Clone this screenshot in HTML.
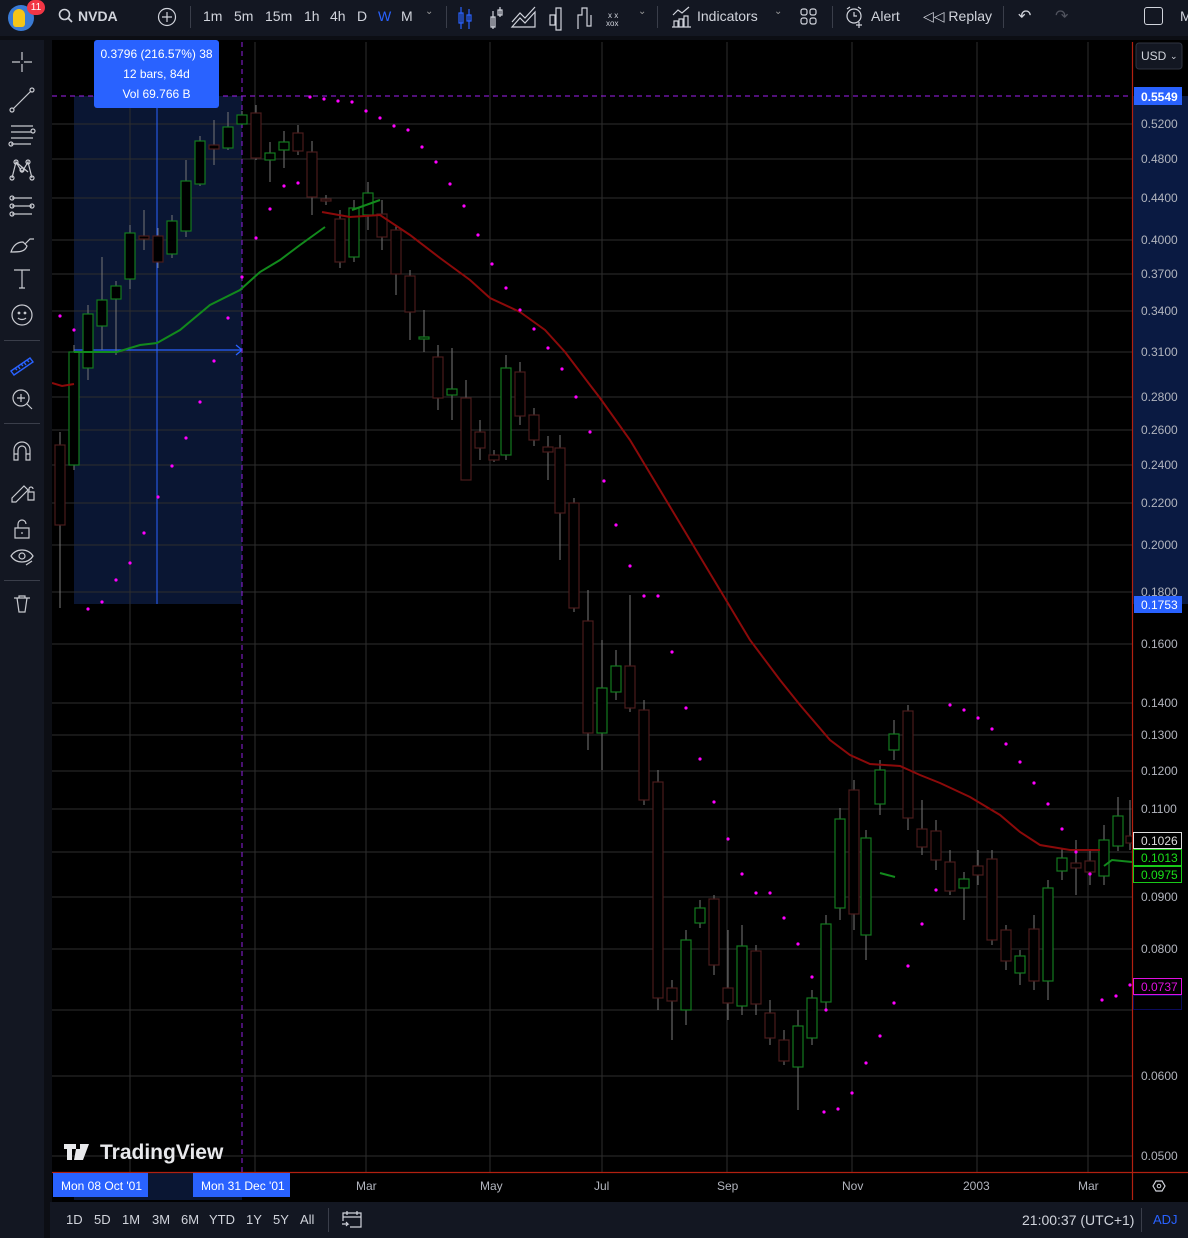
<!DOCTYPE html>
<html><head><meta charset="utf-8"><style>
*{margin:0;padding:0;box-sizing:border-box}
body{width:1188px;height:1238px;background:#0c0e14;overflow:hidden;font-family:"Liberation Sans",sans-serif;color:#d1d4dc;position:relative}
.top{position:absolute;left:0;top:0;width:1188px;height:36px;background:#131722}
.left{position:absolute;left:0;top:40px;width:44px;height:1198px;background:#131722}
.bot{position:absolute;left:50px;top:1202px;width:1138px;height:36px;background:#131722}
.t{position:absolute;font-size:14px;color:#d1d4dc;white-space:nowrap}
.sep{position:absolute;width:1px;background:#3a3e4a}
svg{position:absolute}
</style></head><body>
<div class="top"></div><div class="left"></div><div class="bot"></div>

<!-- top bar -->
<div style="position:absolute;left:8px;top:5px;width:26px;height:26px;border-radius:50%;background:#3a7bd5"></div>
<div style="position:absolute;left:13px;top:9px;width:12px;height:18px;background:#f5c518;border-radius:6px 6px 3px 3px"></div>
<div style="position:absolute;left:27px;top:0;width:18px;height:15px;border-radius:8px;background:#f23645;color:#fff;font-size:10px;text-align:center;line-height:15px">11</div>
<svg style="left:58px;top:8px" width="16" height="16"><circle cx="6.5" cy="6.5" r="5" fill="none" stroke="#d1d4dc" stroke-width="1.6"/><path d="M10 10l4 4" stroke="#d1d4dc" stroke-width="1.8"/></svg>
<div class="t" style="left:78px;top:8px;font-weight:bold">NVDA</div>
<svg style="left:156px;top:6px" width="22" height="22"><circle cx="11" cy="11" r="8.5" fill="none" stroke="#d1d4dc" stroke-width="1.2"/><path d="M11 6v10M6 11h10" stroke="#d1d4dc" stroke-width="1.2"/></svg>
<div class="sep" style="left:190px;top:6px;height:22px"></div>
<div class="t" style="left:203px;top:8px">1m</div>
<div class="t" style="left:234px;top:8px">5m</div>
<div class="t" style="left:265px;top:8px">15m</div>
<div class="t" style="left:304px;top:8px">1h</div>
<div class="t" style="left:330px;top:8px">4h</div>
<div class="t" style="left:357px;top:8px">D</div>
<div class="t" style="left:378px;top:8px;color:#2962ff">W</div>
<div class="t" style="left:401px;top:8px">M</div>
<div class="t" style="left:425px;top:6px;font-size:10px;color:#999">⌄</div>
<div class="sep" style="left:446px;top:6px;height:22px"></div>
<svg style="left:456px;top:5px" width="200" height="26" fill="none" stroke-width="1.2">
<path d="M5 2v22M3 8h4v10H3zM13 4v20M11 10h4v6h-4z" stroke="#2962ff"/>
<path d="M37 6v18M35 12h4v10h-4zM44 2v10M42 5h4v5h-4z" stroke="#d1d4dc"/>
<path d="M56 22l8-9 5 5 10-11v15H56z M56 17l8-9 5 5 10-11" stroke="#d1d4dc"/>
<path d="M94 10h5v10h-5zM100 3h5v22h-5z" stroke="#d1d4dc"/>
<path d="M122 24v-14h4v-7h5v18h4v-11" stroke="#d1d4dc"/>
<text x="152" y="13" font-size="8" fill="#d1d4dc" stroke="none">x x</text><text x="150" y="21" font-size="8" fill="#d1d4dc" stroke="none">xox</text>
</svg>
<div class="t" style="left:638px;top:6px;font-size:10px;color:#999">⌄</div>
<div class="sep" style="left:657px;top:6px;height:22px"></div>
<svg style="left:671px;top:5px" width="22" height="24" fill="none" stroke="#d1d4dc" stroke-width="1.2"><path d="M2 10l5-5 4 3 7-6M3 22v-6h4v6M8 22v-8h4v8M13 22v-11h4v11M1 22h19"/></svg>
<div class="t" style="left:697px;top:8px">Indicators</div>
<div class="t" style="left:774px;top:6px;font-size:10px;color:#999">⌄</div>
<svg style="left:799px;top:7px" width="20" height="20" fill="none" stroke="#d1d4dc" stroke-width="1.2"><rect x="2" y="2" width="6" height="6" rx="2"/><rect x="11" y="2" width="6" height="6" rx="2"/><rect x="2" y="11" width="6" height="6" rx="2"/><rect x="11" y="11" width="6" height="6" rx="2"/></svg>
<div class="sep" style="left:832px;top:6px;height:22px"></div>
<svg style="left:844px;top:5px" width="24" height="24" fill="none" stroke="#d1d4dc" stroke-width="1.2"><circle cx="10" cy="11" r="7"/><path d="M10 7v4h3M3 4l3-2M17 4l-3-2M15 17v6M12 20h6"/></svg>
<div class="t" style="left:871px;top:8px">Alert</div>
<div class="t" style="left:923px;top:8px">◁◁ Replay</div>
<div class="sep" style="left:1003px;top:6px;height:22px"></div>
<div class="t" style="left:1018px;top:6px;font-size:16px">↶</div>
<div class="t" style="left:1055px;top:6px;font-size:16px;color:#50535e">↷</div>
<div style="position:absolute;left:1144px;top:7px;width:19px;height:18px;border:1.3px solid #d1d4dc;border-radius:3px"></div>
<div class="t" style="left:1180px;top:8px">M</div>

<!-- left toolbar icons -->
<svg style="left:8px;top:48px" width="30" height="580" fill="none" stroke="#c8cad0" stroke-width="1.2">
<path d="M14 4v8M14 16v8M4 14h8M16 14h8"/>
<path d="M5 61l18-18"/><circle cx="4" cy="62" r="2"/><circle cx="24" cy="42" r="2"/>
<path d="M3 78h22M3 84h20M3 90h22M3 96h20"/><circle cx="25" cy="83" r="2"/><circle cx="3" cy="96" r="2"/>
<path d="M4 130l4-16 6 10 6-10 4 16M8 114l12 10"/><circle cx="4" cy="130" r="2"/><circle cx="8" cy="114" r="2"/><circle cx="20" cy="114" r="2"/><circle cx="24" cy="130" r="2"/><circle cx="14" cy="122" r="2"/>
<path d="M4 150h20M4 158h20M4 166h20"/><circle cx="4" cy="150" r="2"/><circle cx="4" cy="158" r="2"/><circle cx="4" cy="166" r="2"/><circle cx="24" cy="158" r="2"/>
<path d="M3 204c2-6 6-10 12-10l4 4c-2 6-8 6-16 6zM17 196l5-5 4 0"/>
<path d="M6 222h16M14 222v18M11 240h6"/>
<circle cx="14" cy="267" r="10"/><circle cx="11" cy="265" r=".8"/><circle cx="17" cy="265" r=".8"/><path d="M10 270c2 2 6 2 8 0"/>
<path d="M3 323l19-13 3 4-19 13z M7 320l2 2M10 318l2 3M13 316l2 2M16 314l2 3M19 312l2 2" stroke="#2962ff" stroke-width="1.4"/>
<circle cx="13" cy="350" r="8"/><path d="M19 356l5 5M13 346v8M9 350h8"/>
<path d="M6 412v-10a8 8 0 0 1 16 0v10h-4v-10a4 4 0 0 0-8 0v10zM6 406h4M18 406h4"/>
<path d="M4 450l12-12 4 4-12 12H4zM20 444h6v8h-6z M21 444v-3a2 2 0 0 1 4 0"/>
<path d="M7 480h14v10H7zM10 480v-4a4 4 0 0 1 8 0"/><path d="M14 484v2"/>
<path d="M3 508c5-8 17-8 22 0c-5 8-17 8-22 0z"/><circle cx="14" cy="508" r="3"/><path d="M18 517l6-4"/>
<path d="M6 550h16M9 550l2 14h6l2-14M11 550v-2h6v2"/>
</svg>
<div style="position:absolute;left:4px;top:340px;width:36px;height:1px;background:#3a3e4a"></div>
<div style="position:absolute;left:4px;top:423px;width:36px;height:1px;background:#3a3e4a"></div>
<div style="position:absolute;left:4px;top:580px;width:36px;height:1px;background:#3a3e4a"></div>

<!-- chart -->
<svg style="left:52px;top:40px" width="1136" height="1162" viewBox="52 40 1136 1162">
<rect x="52" y="40" width="1136" height="1162" fill="#000"/>
<rect x="74" y="96" width="168" height="508" fill="#0a1633"/>
<rect x="1133" y="96" width="55" height="508" fill="#0a1a42"/>
<rect x="74" y="1173" width="168" height="27" fill="#0a1633"/>
<g stroke="#2e2e2e" stroke-width="1">
<path d="M52 124H1132M52 159H1132M52 198H1132M52 240H1132M52 274H1132M52 311H1132M52 352H1132M52 397H1132M52 430H1132M52 465H1132M52 503H1132M52 545H1132M52 592H1132M52 644H1132M52 703H1132M52 735H1132M52 771H1132M52 809H1132M52 852H1132M52 897H1132M52 949H1132M52 1010H1132M52 1076H1132M52 1156H1132"/>
<path d="M130 42V1172M255 42V1172M366 42V1172M490 42V1172M602 42V1172M727 42V1172M852 42V1172M977 42V1172M1088 42V1172"/>
</g>
<path d="M157 100V604" stroke="#2962ff"/>
<path d="M74 350H242M236 345l6 5-6 5" stroke="#2962ff" fill="none" stroke-width="1.3"/>
<path d="M52 96H1132" stroke="#a020f0" stroke-dasharray="5 4"/>
<path d="M242 42V1172" stroke="#9020e0" stroke-dasharray="5 4"/>
<g stroke="#777" stroke-width="1">
<path d="M60 432V608M74 345V470M88 305V380M102 257V350M116 281V355M130 225V289M144 210V250M158 228V268M172 215V258M186 160V237M200 136V186M214 120V165M228 112V150M242 111V125M256 105V160M270 142V182M284 131V168M298 125V155M312 141V215M326 195V205M340 210V268M354 200V262M368 182V230M382 200V250M396 225V295M410 270V340M424 310V352M438 345V410M452 348V420M466 380V480M480 420V460M494 450V462M506 355V460M520 362V425M534 408V446M548 436V480M560 435V560M574 498V612M588 590V750M602 640V770M616 650V700M630 595V712M644 700V805M658 770V1010M672 980V1040M686 930V1025M700 900V928M714 895V975M728 930V1020M742 925V1015M756 945V1015M770 1000V1045M784 1030V1065M798 1010V1110M812 990V1045M826 915V1010M840 808V920M854 780V930M866 830V960M880 760V815M894 720V760M908 705V830M922 800V855M936 820V870M950 850V895M964 872V920M978 850V885M992 850V945M1006 925V970M1020 950V985M1034 915V990M1048 880V1000M1062 848V880M1076 840V895M1090 850V885M1104 825V885M1118 797V851M1130 800V850"/>
</g>
<g fill="#000" stroke-width="1.2">
<g stroke="#4a1c1c">
<rect x="55" y="445" width="10" height="80"/><rect x="139" y="236" width="10" height="3"/><rect x="153" y="236" width="10" height="26"/><rect x="209" y="145" width="10" height="4"/><rect x="251" y="113" width="10" height="45"/><rect x="293" y="133" width="10" height="18"/><rect x="307" y="152" width="10" height="45"/><rect x="321" y="199" width="10" height="2"/><rect x="335" y="219" width="10" height="43"/><rect x="377" y="214" width="10" height="23"/><rect x="391" y="230" width="10" height="44"/><rect x="405" y="276" width="10" height="36"/><rect x="433" y="357" width="10" height="41"/><rect x="461" y="398" width="10" height="82"/><rect x="475" y="432" width="10" height="16"/><rect x="489" y="455" width="10" height="5"/><rect x="515" y="372" width="10" height="44"/><rect x="529" y="415" width="10" height="25"/><rect x="543" y="447" width="10" height="5"/><rect x="555" y="448" width="10" height="65"/><rect x="569" y="503" width="10" height="105"/><rect x="583" y="621" width="10" height="112"/><rect x="625" y="666" width="10" height="42"/><rect x="639" y="710" width="10" height="90"/><rect x="653" y="782" width="10" height="216"/><rect x="667" y="988" width="10" height="13"/><rect x="709" y="899" width="10" height="66"/><rect x="723" y="988" width="10" height="15"/><rect x="751" y="951" width="10" height="53"/><rect x="765" y="1013" width="10" height="25"/><rect x="779" y="1040" width="10" height="21"/><rect x="849" y="790" width="10" height="124"/><rect x="903" y="711" width="10" height="107"/><rect x="917" y="829" width="10" height="18"/><rect x="931" y="831" width="10" height="29"/><rect x="945" y="862" width="10" height="29"/><rect x="973" y="866" width="10" height="9"/><rect x="987" y="859" width="10" height="81"/><rect x="1001" y="930" width="10" height="31"/><rect x="1029" y="929" width="10" height="52"/><rect x="1071" y="863" width="10" height="5"/><rect x="1085" y="861" width="10" height="11"/><rect x="1126" y="836" width="8" height="7"/>
</g>
<g stroke="#137a1f">
<rect x="69" y="352" width="10" height="113"/><rect x="83" y="314" width="10" height="54"/><rect x="97" y="300" width="10" height="26"/><rect x="111" y="286" width="10" height="13"/><rect x="125" y="233" width="10" height="46"/><rect x="167" y="221" width="10" height="33"/><rect x="181" y="181" width="10" height="50"/><rect x="195" y="141" width="10" height="43"/><rect x="223" y="127" width="10" height="21"/><rect x="237" y="115" width="10" height="9"/><rect x="265" y="153" width="10" height="7"/><rect x="279" y="142" width="10" height="8"/><rect x="349" y="208" width="10" height="49"/><rect x="363" y="193" width="10" height="22"/><rect x="419" y="337" width="10" height="2"/><rect x="447" y="389" width="10" height="6"/><rect x="501" y="368" width="10" height="87"/><rect x="597" y="688" width="10" height="45"/><rect x="611" y="666" width="10" height="26"/><rect x="681" y="940" width="10" height="70"/><rect x="695" y="908" width="10" height="15"/><rect x="737" y="946" width="10" height="60"/><rect x="793" y="1026" width="10" height="41"/><rect x="807" y="998" width="10" height="40"/><rect x="821" y="924" width="10" height="78"/><rect x="835" y="819" width="10" height="89"/><rect x="861" y="838" width="10" height="97"/><rect x="875" y="770" width="10" height="34"/><rect x="889" y="734" width="10" height="16"/><rect x="959" y="879" width="10" height="9"/><rect x="1015" y="956" width="10" height="17"/><rect x="1043" y="888" width="10" height="93"/><rect x="1057" y="858" width="10" height="13"/><rect x="1099" y="840" width="10" height="36"/><rect x="1113" y="816" width="10" height="30"/>
</g>
</g>
<g fill="none" stroke-width="2">
<path d="M52 383L62 386L74 384" stroke="#8b0a0a"/>
<path d="M322 212L350 217L380 215L410 235L440 258L470 280L490 298L520 312L545 330L565 352L590 385L600 398L630 440L660 490L690 540L720 590L750 640L780 680L800 705L830 740L850 755L870 764L900 766L920 775L940 783L970 797L1000 815L1020 832L1040 845L1070 850L1100 850" stroke="#8b0a0a"/>
<path d="M74 352L117 352L140 345L157 343L180 330L210 305L240 290L260 272L280 260L300 245L325 227M352 210L380 200M880 873L895 877M1104 866L1112 860L1132 862" stroke="#128a1c"/>
</g>
<g fill="#ff00ff">
<circle cx="60" cy="316" r="1.6"/><circle cx="74" cy="330" r="1.6"/><circle cx="88" cy="609" r="1.6"/><circle cx="102" cy="602" r="1.6"/><circle cx="116" cy="580" r="1.6"/><circle cx="130" cy="563" r="1.6"/><circle cx="144" cy="533" r="1.6"/><circle cx="158" cy="497" r="1.6"/><circle cx="172" cy="466" r="1.6"/><circle cx="186" cy="438" r="1.6"/><circle cx="200" cy="402" r="1.6"/><circle cx="214" cy="361" r="1.6"/><circle cx="228" cy="318" r="1.6"/><circle cx="242" cy="277" r="1.6"/><circle cx="256" cy="238" r="1.6"/><circle cx="270" cy="209" r="1.6"/><circle cx="284" cy="186" r="1.6"/><circle cx="298" cy="183" r="1.6"/><circle cx="310" cy="97" r="1.6"/><circle cx="324" cy="99" r="1.6"/><circle cx="338" cy="101" r="1.6"/><circle cx="352" cy="102" r="1.6"/><circle cx="366" cy="111" r="1.6"/><circle cx="380" cy="118" r="1.6"/><circle cx="394" cy="126" r="1.6"/><circle cx="408" cy="130" r="1.6"/><circle cx="422" cy="147" r="1.6"/><circle cx="436" cy="162" r="1.6"/><circle cx="450" cy="184" r="1.6"/><circle cx="464" cy="206" r="1.6"/><circle cx="478" cy="235" r="1.6"/><circle cx="492" cy="264" r="1.6"/><circle cx="506" cy="288" r="1.6"/><circle cx="520" cy="310" r="1.6"/><circle cx="534" cy="329" r="1.6"/><circle cx="548" cy="348" r="1.6"/><circle cx="562" cy="369" r="1.6"/><circle cx="576" cy="397" r="1.6"/><circle cx="590" cy="432" r="1.6"/><circle cx="604" cy="481" r="1.6"/><circle cx="616" cy="525" r="1.6"/><circle cx="630" cy="566" r="1.6"/><circle cx="644" cy="596" r="1.6"/><circle cx="658" cy="596" r="1.6"/><circle cx="672" cy="652" r="1.6"/><circle cx="686" cy="708" r="1.6"/><circle cx="700" cy="759" r="1.6"/><circle cx="714" cy="802" r="1.6"/><circle cx="728" cy="839" r="1.6"/><circle cx="742" cy="874" r="1.6"/><circle cx="756" cy="893" r="1.6"/><circle cx="770" cy="893" r="1.6"/><circle cx="784" cy="918" r="1.6"/><circle cx="798" cy="944" r="1.6"/><circle cx="812" cy="977" r="1.6"/><circle cx="826" cy="1010" r="1.6"/><circle cx="824" cy="1112" r="1.6"/><circle cx="838" cy="1109" r="1.6"/><circle cx="852" cy="1093" r="1.6"/><circle cx="866" cy="1063" r="1.6"/><circle cx="880" cy="1036" r="1.6"/><circle cx="894" cy="1003" r="1.6"/><circle cx="908" cy="966" r="1.6"/><circle cx="922" cy="924" r="1.6"/><circle cx="936" cy="890" r="1.6"/><circle cx="950" cy="705" r="1.6"/><circle cx="964" cy="710" r="1.6"/><circle cx="978" cy="718" r="1.6"/><circle cx="992" cy="729" r="1.6"/><circle cx="1006" cy="744" r="1.6"/><circle cx="1020" cy="762" r="1.6"/><circle cx="1034" cy="783" r="1.6"/><circle cx="1048" cy="804" r="1.6"/><circle cx="1062" cy="829" r="1.6"/><circle cx="1076" cy="852" r="1.6"/><circle cx="1090" cy="874" r="1.6"/><circle cx="1102" cy="1000" r="1.6"/><circle cx="1116" cy="996" r="1.6"/><circle cx="1130" cy="985" r="1.6"/>
</g>
<path d="M1132.5 42V1172M52 1172.5H1188M1132.5 1172V1200" stroke="#b22010" stroke-width="1.2"/>
<g font-family="Liberation Sans" font-size="12" fill="#b2b5be">
<text x="1141" y="128">0.5200</text><text x="1141" y="163">0.4800</text><text x="1141" y="202">0.4400</text><text x="1141" y="244">0.4000</text><text x="1141" y="278">0.3700</text><text x="1141" y="315">0.3400</text><text x="1141" y="356">0.3100</text><text x="1141" y="401">0.2800</text><text x="1141" y="434">0.2600</text><text x="1141" y="469">0.2400</text><text x="1141" y="507">0.2200</text><text x="1141" y="549">0.2000</text><text x="1141" y="596">0.1800</text><text x="1141" y="648">0.1600</text><text x="1141" y="707">0.1400</text><text x="1141" y="739">0.1300</text><text x="1141" y="775">0.1200</text><text x="1141" y="813">0.1100</text><text x="1141" y="901">0.0900</text><text x="1141" y="953">0.0800</text><text x="1141" y="1080">0.0600</text><text x="1141" y="1160">0.0500</text>
<text x="356" y="1190">Mar</text><text x="480" y="1190">May</text><text x="594" y="1190">Jul</text><text x="717" y="1190">Sep</text><text x="842" y="1190">Nov</text><text x="963" y="1190">2003</text><text x="1078" y="1190">Mar</text>
</g>
<rect x="1134" y="87" width="48" height="18" fill="#2962ff"/><text x="1141" y="101" font-size="12" fill="#fff" font-weight="bold">0.5549</text>
<rect x="1134" y="596" width="48" height="17" fill="#2962ff"/><text x="1141" y="609" font-size="12" fill="#fff">0.1753</text>
<rect x="1133.5" y="832.5" width="48" height="16" fill="#000" stroke="#ddd"/><text x="1141" y="845" font-size="12" fill="#ddd">0.1026</text>
<rect x="1133.5" y="849.5" width="48" height="16" fill="#000" stroke="#19c919"/><text x="1141" y="862" font-size="12" fill="#19e019">0.1013</text>
<rect x="1133.5" y="866.5" width="48" height="16" fill="#000" stroke="#19c919"/><text x="1141" y="879" font-size="12" fill="#19e019">0.0975</text>
<rect x="1133.5" y="978.5" width="48" height="16" fill="#000" stroke="#e010e0"/><text x="1141" y="991" font-size="12" fill="#e010e0">0.0737</text>
<rect x="1133.5" y="995.5" width="48" height="14" fill="#000" stroke="#0b0b5a"/>
<rect x="1136" y="43" width="46" height="26" rx="3" fill="#131722" stroke="#2f3340"/><text x="1141" y="60" font-size="12" fill="#d1d4dc">USD</text><text x="1170" y="59" font-size="9" fill="#d1d4dc">⌄</text>
<rect x="53" y="1173" width="95" height="24" fill="#2962ff"/><text x="61" y="1190" font-size="12" fill="#fff">Mon 08 Oct '01</text>
<rect x="193" y="1173" width="97" height="24" fill="#2962ff"/><text x="201" y="1190" font-size="12" fill="#fff">Mon 31 Dec '01</text>
<path d="M1153 1186l3-5h6l3 5-3 5h-6z" fill="none" stroke="#d1d4dc" stroke-width="1.2"/><circle cx="1159" cy="1186" r="1.8" fill="none" stroke="#d1d4dc"/>
<g fill="#e8e9ec">
<path d="M64 1144h12v5h-4v11h-5v-11h-3zM76 1149h4v-5h4l-6 16h-4z M83 1144h6l-6 16h-5z" />
</g>
<text x="100" y="1159" font-size="21" fill="#e8e9ec" font-weight="bold">TradingView</text>
</svg>

<!-- bottom bar -->
<div class="t" style="left:66px;top:1212px;font-size:13px">1D</div>
<div class="t" style="left:94px;top:1212px;font-size:13px">5D</div>
<div class="t" style="left:122px;top:1212px;font-size:13px">1M</div>
<div class="t" style="left:152px;top:1212px;font-size:13px">3M</div>
<div class="t" style="left:181px;top:1212px;font-size:13px">6M</div>
<div class="t" style="left:209px;top:1212px;font-size:13px">YTD</div>
<div class="t" style="left:246px;top:1212px;font-size:13px">1Y</div>
<div class="t" style="left:273px;top:1212px;font-size:13px">5Y</div>
<div class="t" style="left:300px;top:1212px;font-size:13px">All</div>
<div class="sep" style="left:328px;top:1208px;height:24px"></div>
<svg style="left:341px;top:1209px" width="22" height="20" fill="none" stroke="#d1d4dc" stroke-width="1.2"><path d="M2 8h18M6 2v4M16 2v4M2 12V4h18v14H9M1 15h6l-2-2M7 15l-2 2"/></svg>
<div class="t" style="left:1022px;top:1212px;font-size:14px">21:00:37 (UTC+1)</div>
<div class="sep" style="left:1141px;top:1208px;height:24px"></div>
<div class="t" style="left:1153px;top:1212px;font-size:13px;color:#2962ff">ADJ</div>

<!-- tooltip -->
<div style="position:absolute;left:94px;top:40px;width:125px;height:68px;background:#2962ff;border-radius:3px;color:#fff;font-size:12px;text-align:center;line-height:20px;padding-top:4px">0.3796 (216.57%) 38<br>12 bars, 84d<br>Vol 69.766 B</div>
</body></html>
